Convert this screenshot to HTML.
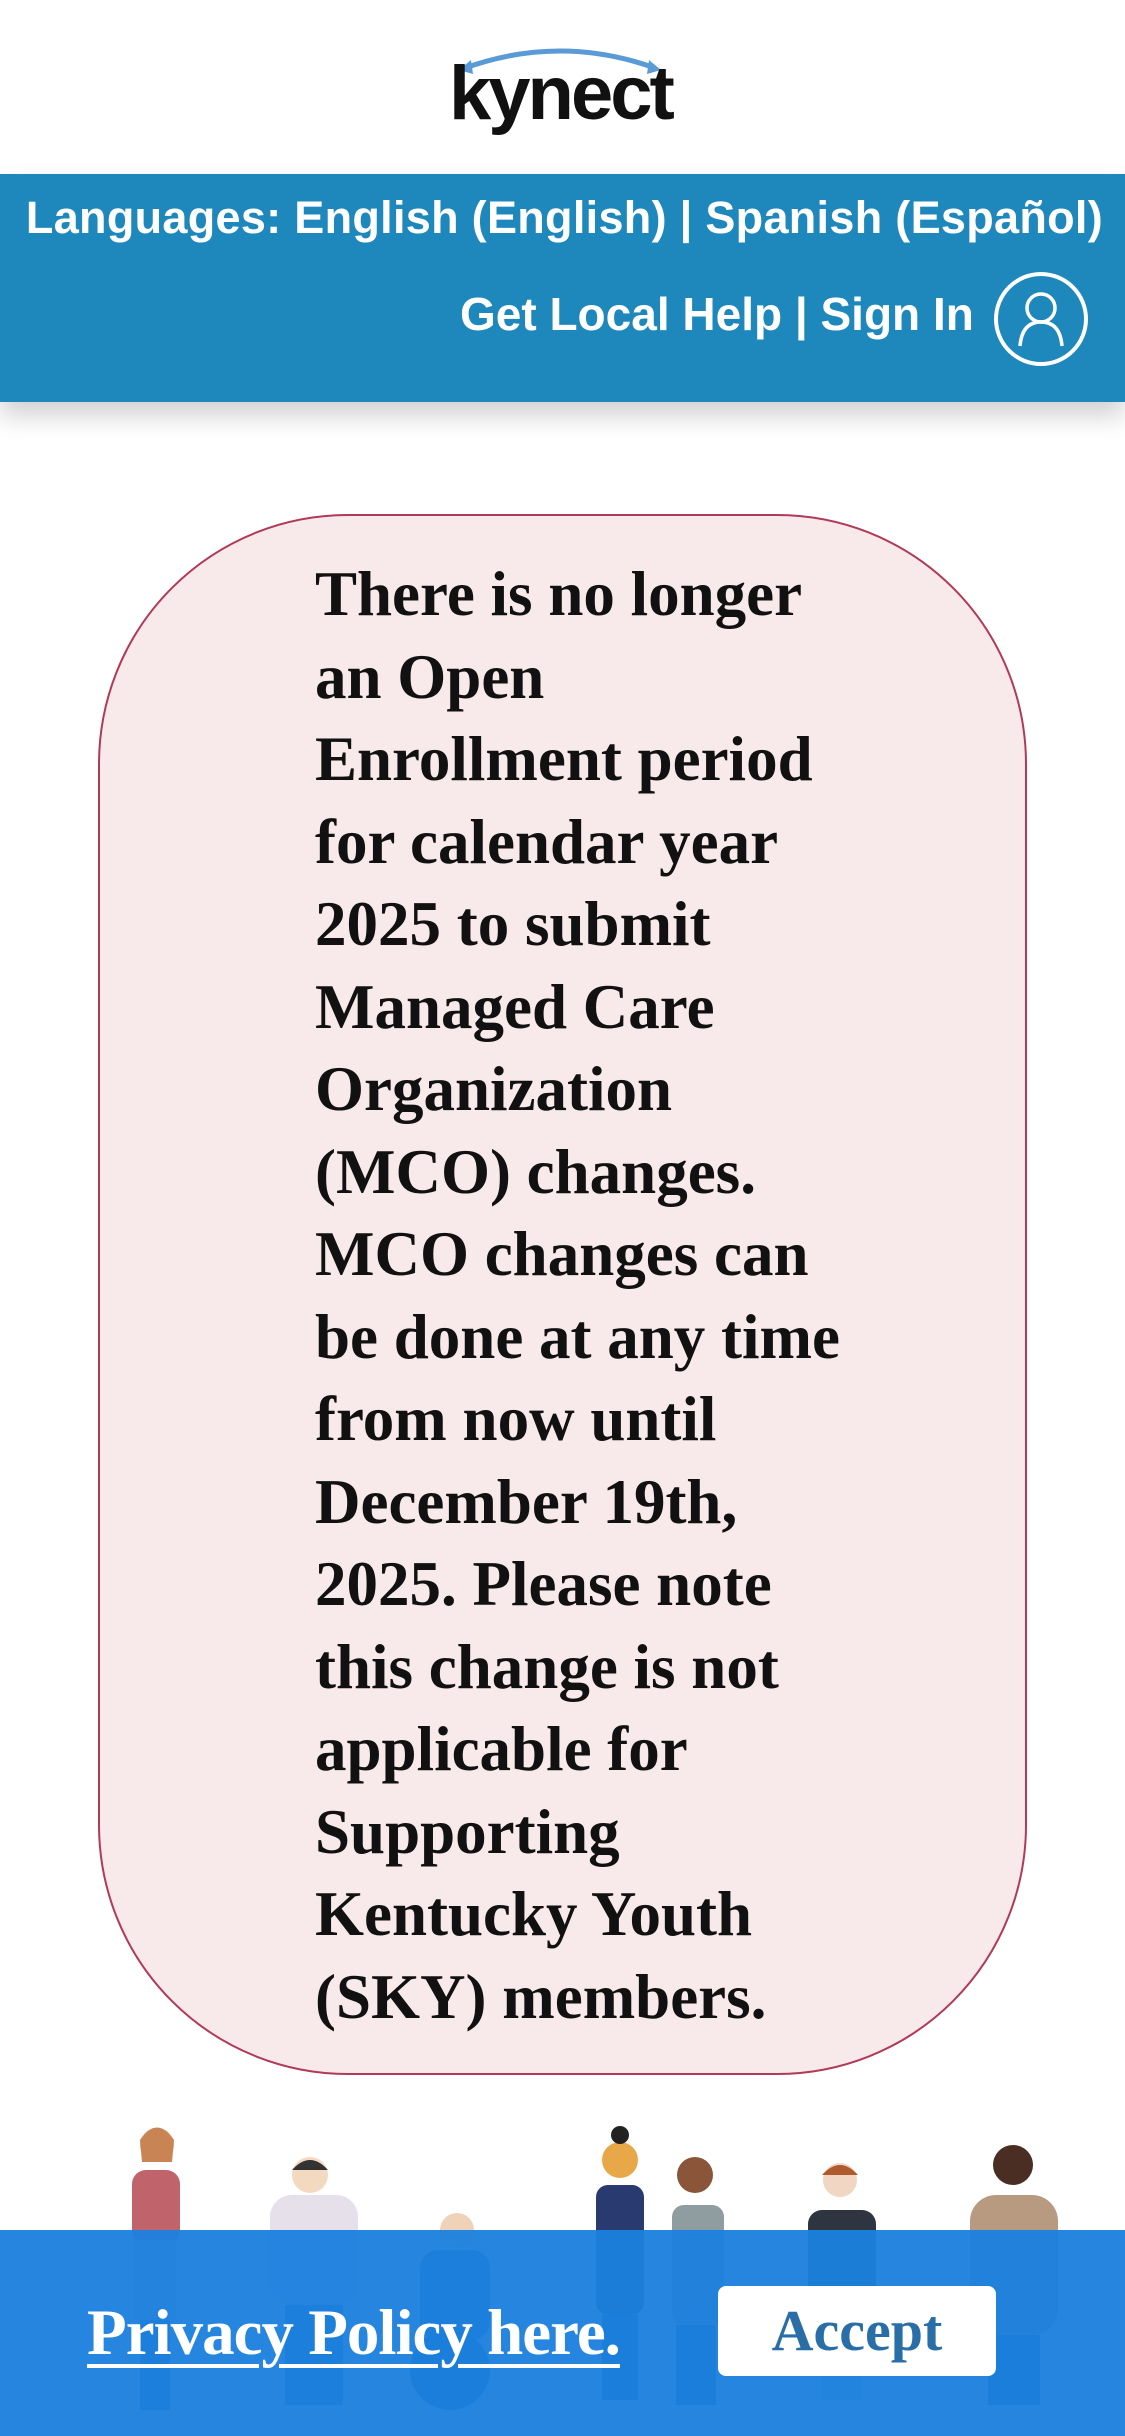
<!DOCTYPE html>
<html><head><meta charset="utf-8"><style>
*{margin:0;padding:0;box-sizing:border-box}
html,body{width:1125px;height:2436px;overflow:hidden;background:#fff;position:relative;font-family:"Liberation Sans",sans-serif}
.hdr{position:absolute;left:0;top:0;width:1125px;height:174px;background:#fff}
.logo{position:absolute;left:449px;top:56px;font:bold 76px/1 "Liberation Sans",sans-serif;color:#111;letter-spacing:-3px}
.bar{position:absolute;left:0;top:174px;width:1125px;height:228px;background:#1e88bd;box-shadow:0 14px 24px rgba(0,0,0,.18)}
.r1{position:absolute;right:22px;top:190px;font-size:45px;line-height:56px;white-space:nowrap;color:#fff;font-weight:bold;letter-spacing:0.3px}
.r2{position:absolute;left:460px;top:286px;font-size:46px;line-height:56px;white-space:nowrap;color:#fff;font-weight:bold}
.box{position:absolute;left:98px;top:514px;width:929px;height:1561px;background:#f8e9ea;border:2px solid #b03a58;border-radius:250px}
.txt{position:absolute;left:315px;top:553px;font:bold 63px/82.5px "Liberation Serif",serif;color:#111;white-space:nowrap;letter-spacing:0}
.cookie{position:absolute;left:0;top:2230px;width:1125px;height:206px;background:rgba(28,128,222,.96)}
.pp{position:absolute;left:87px;top:2298px;font:bold 65px/70px "Liberation Serif",serif;color:#fff;text-decoration:underline;text-decoration-thickness:4px;text-underline-offset:10px;white-space:nowrap;letter-spacing:-1px}
.acc{position:absolute;left:718px;top:2286px;width:278px;height:90px;background:#fff;border-radius:8px;font:bold 58px/90px "Liberation Serif",serif;color:#2a6ea8;text-align:center}
</style></head><body>
<div class="hdr">
<svg style="position:absolute;left:455px;top:40px" width="220" height="40" viewBox="0 0 220 40"><path d="M10 28 Q105 -6 200 28" fill="none" stroke="#5a9ad6" stroke-width="5"/><path d="M4 30 L16 20 L18 34Z" fill="#5a9ad6"/><path d="M206 30 L194 20 L192 34Z" fill="#5a9ad6"/></svg>
<div class="logo">kynect</div>
</div>
<div class="bar"></div>
<div class="r1">Languages: English (English) | Spanish (Español)</div>
<div class="r2">Get Local Help | Sign In</div>
<svg style="position:absolute;left:992px;top:270px" width="98" height="98" viewBox="0 0 98 98"><circle cx="49" cy="49" r="45" fill="none" stroke="#fff" stroke-width="4"/><circle cx="49" cy="38" r="14" fill="none" stroke="#fff" stroke-width="3.5"/><path d="M28 76 Q30 52 49 52 Q68 52 70 76" fill="none" stroke="#fff" stroke-width="3.5"/></svg>
<div class="box"></div>
<div class="txt">There is no longer<br>an Open<br>Enrollment period<br>for calendar year<br>2025 to submit<br>Managed Care<br>Organization<br>(MCO) changes.<br>MCO changes can<br>be done at any time<br>from now until<br>December 19th,<br>2025. Please note<br>this change is not<br>applicable for<br>Supporting<br>Kentucky Youth<br>(SKY) members.</div>
<svg style="position:absolute;left:0;top:2100px" width="1125" height="336" viewBox="0 0 1125 336">
<g><circle cx="157" cy="45" r="17" fill="#e8c2a0"/><path d="M140 40 Q157 15 174 40 L172 62 L142 62Z" fill="#c98456"/><rect x="132" y="70" width="48" height="75" rx="14" fill="#c0636a"/><rect x="134" y="140" width="42" height="80" fill="#d8cfb0"/><rect x="140" y="220" width="30" height="90" fill="#2a5fa0"/></g>
<g><circle cx="310" cy="75" r="18" fill="#f3d9c0"/><path d="M292 70 Q310 50 328 70Z" fill="#333"/><rect x="270" y="95" width="88" height="110" rx="22" fill="#e6e0ea"/><rect x="285" y="205" width="58" height="100" fill="#3866a8"/></g>
<g><circle cx="457" cy="130" r="17" fill="#f0d2b8"/><rect x="420" y="150" width="70" height="90" rx="18" fill="#3a68b0"/><circle cx="450" cy="270" r="40" fill="#2e5aa0"/></g>
<g><circle cx="620" cy="60" r="18" fill="#e8a84a"/><circle cx="620" cy="35" r="9" fill="#222"/><rect x="596" y="85" width="48" height="130" rx="12" fill="#283a70"/><rect x="602" y="215" width="36" height="85" fill="#2456a0"/></g>
<g><circle cx="695" cy="75" r="18" fill="#8a5538"/><rect x="672" y="105" width="52" height="120" rx="12" fill="#8f9ca0"/><rect x="676" y="225" width="40" height="80" fill="#2456a0"/></g>
<g><circle cx="840" cy="80" r="17" fill="#f1d6c4"/><path d="M822 75 Q840 55 858 75Z" fill="#b05a30"/><rect x="808" y="110" width="68" height="120" rx="14" fill="#2e3440"/><rect x="822" y="230" width="40" height="70" fill="#cfd6dc"/></g>
<g><circle cx="1013" cy="65" r="20" fill="#4a2e24"/><rect x="970" y="95" width="88" height="140" rx="26" fill="#b89a80"/><rect x="988" y="235" width="52" height="70" fill="#2456a0"/></g>
</svg>
<div class="cookie"></div>
<div class="pp">Privacy Policy here.</div>
<div class="acc">Accept</div>
</body></html>
